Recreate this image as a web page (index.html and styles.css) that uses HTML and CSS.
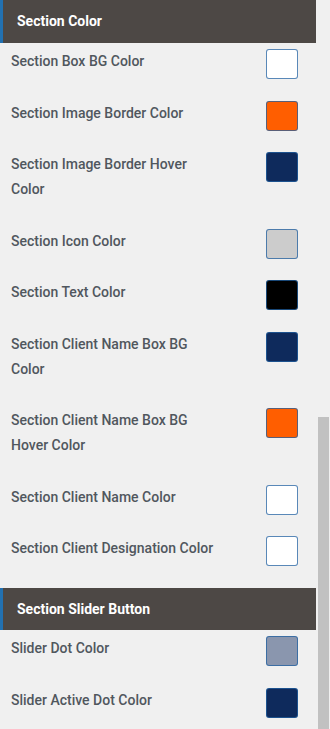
FILE: index.html
```html
<!DOCTYPE html>
<html>
<head>
<meta charset="utf-8">
<link rel="stylesheet" href="styles.css">
</head>
<body>
<div class="panel">
  <section class="group">
    <h3 class="group-head">Section Color</h3>
    <div class="row"><span class="label">Section Box BG Color</span><span class="swatch c-white"></span></div>
    <div class="row"><span class="label">Section Image Border Color</span><span class="swatch c-orange"></span></div>
    <div class="row"><span class="label">Section Image Border Hover Color</span><span class="swatch c-navy"></span></div>
    <div class="row"><span class="label">Section Icon Color</span><span class="swatch c-gray"></span></div>
    <div class="row"><span class="label">Section Text Color</span><span class="swatch c-black"></span></div>
    <div class="row"><span class="label">Section Client Name Box BG Color</span><span class="swatch c-navy"></span></div>
    <div class="row"><span class="label">Section Client Name Box BG Hover Color</span><span class="swatch c-orange"></span></div>
    <div class="row"><span class="label">Section Client Name Color</span><span class="swatch c-white"></span></div>
    <div class="row"><span class="label">Section Client Designation Color</span><span class="swatch c-white"></span></div>
  </section>
  <section class="group">
    <h3 class="group-head">Section Slider Button</h3>
    <div class="row"><span class="label">Slider Dot Color</span><span class="swatch c-slate"></span></div>
    <div class="row"><span class="label">Slider Active Dot Color</span><span class="swatch c-navy"></span></div>
  </section>
</div>
<div class="scroll-thumb"></div>
</body>
</html>
```
FILE: styles.css
```css
html, body {
  margin: 0;
  padding: 0;
  background: #f0f0f0;
  font-family: Roboto, "Liberation Sans", sans-serif;
}
body {
  width: 330px;
  height: 729px;
  overflow: hidden;
}
.panel {
  width: 316px;
}
.group {
  padding-bottom: 6.5px;
}
.group-head {
  margin: 0;
  height: 43px;
  box-sizing: border-box;
  background: #4d4845;
  border-left: 3px solid #2271b1;
  color: #ffffff;
  font-size: 14px;
  font-weight: 700;
  line-height: 43px;
  padding-left: 14px;
}
.group + .group .group-head {
  height: 42px;
  line-height: 42px;
}
.row {
  display: flex;
  align-items: flex-start;
  justify-content: space-between;
  padding: 6px 18px 0 11px;
}
.label {
  width: 207px;
  font-size: 14px;
  font-weight: 500;
  color: #50575e;
  line-height: 25px;
  padding-bottom: 20.5px;
}
.swatch {
  width: 32px;
  height: 30px;
  box-sizing: border-box;
  border-radius: 3px;
  border: 1px solid rgba(34, 96, 160, 0.75);
}
.c-white { background: #ffffff; }
.c-orange { background: #ff5e00; }
.c-navy { background: #0e2a5c; }
.c-gray { background: #cccccc; }
.c-black { background: #000000; }
.c-slate { background: #8a96ae; }
.scroll-thumb {
  position: absolute;
  left: 318px;
  top: 417px;
  width: 11px;
  height: 312px;
  background: #c1c1c1;
}
```
